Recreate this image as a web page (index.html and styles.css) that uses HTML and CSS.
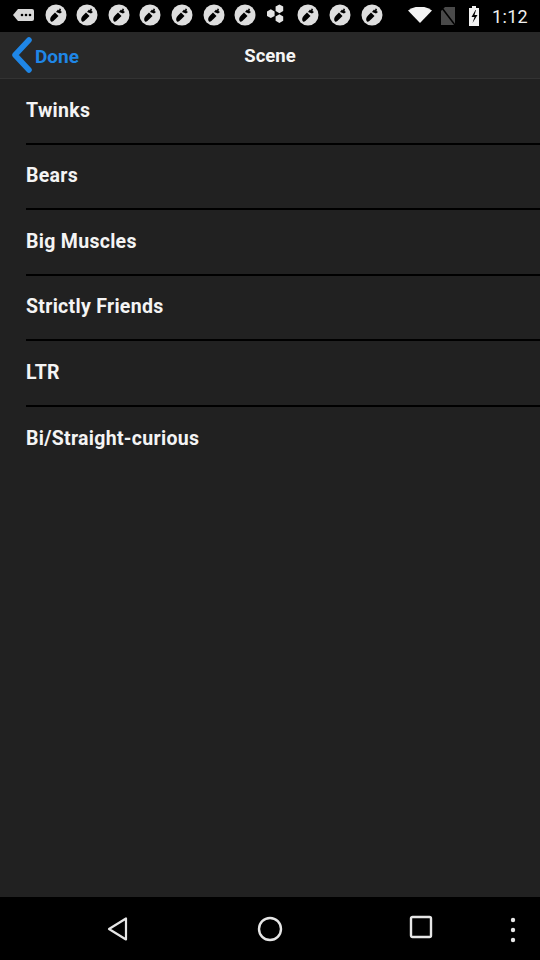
FILE: index.html
```html
<!DOCTYPE html>
<html>
<head>
<meta charset="utf-8">
<link rel="stylesheet" href="styles.css">
</head>
<body>
<div class="screen">
  <div class="statusbar">
    <div class="notifs">
      <svg class="msg" width="22" height="16" viewBox="0 0 22 16"><path d="M5 2h14a2 2 0 0 1 2 2v8a2 2 0 0 1-2 2H5L0 8z" fill="#d8d8d8"/><circle cx="9" cy="8" r="1.3" fill="#000"/><circle cx="13" cy="8" r="1.3" fill="#000"/><circle cx="17" cy="8" r="1.3" fill="#000"/></svg>
      <svg class="app" width="22" height="22" viewBox="0 0 22 22"><circle cx="11" cy="11" r="10.5" fill="#dedede"/><path d="M6 17.5c-1.5-1.5-1-4 1-6l3-3 3.5 3.5-3 3c-2 2-3.5 3.5-4.5 2.5z" fill="#000"/><path d="M11 8l2-2.5 1 1 .5-2 1.5.5-.5 2 1.5 1-2 1.5z" fill="#000"/></svg>
      <svg class="app" width="22" height="22" viewBox="0 0 22 22"><circle cx="11" cy="11" r="10.5" fill="#dedede"/><path d="M6 17.5c-1.5-1.5-1-4 1-6l3-3 3.5 3.5-3 3c-2 2-3.5 3.5-4.5 2.5z" fill="#000"/><path d="M11 8l2-2.5 1 1 .5-2 1.5.5-.5 2 1.5 1-2 1.5z" fill="#000"/></svg>
      <svg class="app" width="22" height="22" viewBox="0 0 22 22"><circle cx="11" cy="11" r="10.5" fill="#dedede"/><path d="M6 17.5c-1.5-1.5-1-4 1-6l3-3 3.5 3.5-3 3c-2 2-3.5 3.5-4.5 2.5z" fill="#000"/><path d="M11 8l2-2.5 1 1 .5-2 1.5.5-.5 2 1.5 1-2 1.5z" fill="#000"/></svg>
      <svg class="app" width="22" height="22" viewBox="0 0 22 22"><circle cx="11" cy="11" r="10.5" fill="#dedede"/><path d="M6 17.5c-1.5-1.5-1-4 1-6l3-3 3.5 3.5-3 3c-2 2-3.5 3.5-4.5 2.5z" fill="#000"/><path d="M11 8l2-2.5 1 1 .5-2 1.5.5-.5 2 1.5 1-2 1.5z" fill="#000"/></svg>
      <svg class="app" width="22" height="22" viewBox="0 0 22 22"><circle cx="11" cy="11" r="10.5" fill="#dedede"/><path d="M6 17.5c-1.5-1.5-1-4 1-6l3-3 3.5 3.5-3 3c-2 2-3.5 3.5-4.5 2.5z" fill="#000"/><path d="M11 8l2-2.5 1 1 .5-2 1.5.5-.5 2 1.5 1-2 1.5z" fill="#000"/></svg>
      <svg class="app" width="22" height="22" viewBox="0 0 22 22"><circle cx="11" cy="11" r="10.5" fill="#dedede"/><path d="M6 17.5c-1.5-1.5-1-4 1-6l3-3 3.5 3.5-3 3c-2 2-3.5 3.5-4.5 2.5z" fill="#000"/><path d="M11 8l2-2.5 1 1 .5-2 1.5.5-.5 2 1.5 1-2 1.5z" fill="#000"/></svg>
      <svg class="app" width="22" height="22" viewBox="0 0 22 22"><circle cx="11" cy="11" r="10.5" fill="#dedede"/><path d="M6 17.5c-1.5-1.5-1-4 1-6l3-3 3.5 3.5-3 3c-2 2-3.5 3.5-4.5 2.5z" fill="#000"/><path d="M11 8l2-2.5 1 1 .5-2 1.5.5-.5 2 1.5 1-2 1.5z" fill="#000"/></svg>
      <svg class="app" width="22" height="22" viewBox="0 0 22 22"><path d="M1 7.5l3.8-2.2 3.8 2.2v4.4l-3.8 2.2L1 11.9z" fill="#e4e4e4"/><path d="M9.6 2.6l3.8-2.2 3.8 2.2V7l-3.8 2.2L9.6 7z" fill="#e4e4e4"/><path d="M9.6 12.4l3.8-2.2 3.8 2.2v4.4l-3.8 2.2-3.8-2.2z" fill="#e4e4e4"/></svg>
      <svg class="app" width="22" height="22" viewBox="0 0 22 22"><circle cx="11" cy="11" r="10.5" fill="#dedede"/><path d="M6 17.5c-1.5-1.5-1-4 1-6l3-3 3.5 3.5-3 3c-2 2-3.5 3.5-4.5 2.5z" fill="#000"/><path d="M11 8l2-2.5 1 1 .5-2 1.5.5-.5 2 1.5 1-2 1.5z" fill="#000"/></svg>
      <svg class="app" width="22" height="22" viewBox="0 0 22 22"><circle cx="11" cy="11" r="10.5" fill="#dedede"/><path d="M6 17.5c-1.5-1.5-1-4 1-6l3-3 3.5 3.5-3 3c-2 2-3.5 3.5-4.5 2.5z" fill="#000"/><path d="M11 8l2-2.5 1 1 .5-2 1.5.5-.5 2 1.5 1-2 1.5z" fill="#000"/></svg>
      <svg class="app" width="22" height="22" viewBox="0 0 22 22"><circle cx="11" cy="11" r="10.5" fill="#dedede"/><path d="M6 17.5c-1.5-1.5-1-4 1-6l3-3 3.5 3.5-3 3c-2 2-3.5 3.5-4.5 2.5z" fill="#000"/><path d="M11 8l2-2.5 1 1 .5-2 1.5.5-.5 2 1.5 1-2 1.5z" fill="#000"/></svg>
    </div>
    <div class="sys">
      <svg class="wifi" width="24" height="16" viewBox="0 0 24 16"><path d="M0 3.5Q12-4.5 24 3.5L12 16z" fill="#f2f2f2"/></svg>
      <svg class="sim" width="14" height="18" viewBox="0 0 14 18"><path d="M4 0h10v18H0V4z" fill="#4a4a4a"/><path d="M1 1l13 17" stroke="#000" stroke-width="1.6"/></svg>
      <svg class="batt" width="12" height="20" viewBox="0 0 12 20"><path d="M4 0h4v2h3v18H1V2h3z" fill="#f2f2f2"/><path d="M7.5 4L3.5 11h3l-2 6 5-8h-3l1.5-5z" fill="#000"/></svg>
      <span class="time">1:12</span>
    </div>
  </div>
  <div class="header">
    <div class="back">
      <svg class="chev" width="24" height="36" viewBox="0 0 24 36"><path d="M19 3L5 18l14 15" fill="none" stroke="#1f86e6" stroke-width="5.5" stroke-linecap="round" stroke-linejoin="round"/></svg>
      <span class="done">Done</span>
    </div>
    <div class="title">Scene</div>
  </div>
  <div class="list">
    <div class="row"><span class="label">Twinks</span></div>
    <div class="row"><span class="label">Bears</span></div>
    <div class="row"><span class="label">Big Muscles</span></div>
    <div class="row"><span class="label">Strictly Friends</span></div>
    <div class="row"><span class="label">LTR</span></div>
    <div class="row last"><span class="label">Bi/Straight-curious</span></div>
  </div>
  <div class="navbar">
    <svg class="nav-back" width="24" height="26" viewBox="0 0 24 26"><path d="M20 2.5v21L3 13z" fill="none" stroke="#e6e6e6" stroke-width="2.2" stroke-linejoin="round"/></svg>
    <svg class="nav-home" width="26" height="26" viewBox="0 0 26 26"><circle cx="13" cy="13" r="11" fill="none" stroke="#e6e6e6" stroke-width="2.4"/></svg>
    <svg class="nav-recent" width="24" height="24" viewBox="0 0 24 24"><rect x="2" y="2" width="20" height="20" rx="1.5" fill="none" stroke="#e6e6e6" stroke-width="2.4"/></svg>
    <svg class="nav-menu" width="6" height="26" viewBox="0 0 6 26"><circle cx="3" cy="3" r="2.2" fill="#e6e6e6"/><circle cx="3" cy="13" r="2.2" fill="#e6e6e6"/><circle cx="3" cy="23" r="2.2" fill="#e6e6e6"/></svg>
  </div>
</div>
</body>
</html>
```
FILE: styles.css
```css
* { box-sizing: border-box; }
html, body { margin: 0; padding: 0; }
body {
  width: 540px;
  height: 960px;
  overflow: hidden;
  background: #212121;
  font-family: Roboto, "Liberation Sans", sans-serif;
}
.screen {
  width: 540px;
  height: 960px;
  display: flex;
  flex-direction: column;
  background: #212121;
}
.statusbar {
  height: 32px;
  background: #000;
  display: flex;
  align-items: center;
  justify-content: space-between;
  padding: 0 12px 0 13px;
  flex-shrink: 0;
}
.notifs {
  display: flex;
  align-items: center;
  gap: 9.6px;
  margin-top: -2px;
}
.sys {
  display: flex;
  align-items: center;
}
.wifi { margin-right: 9px; margin-top: -2px; }
.sim { margin-right: 13px; margin-top: -1px; }
.batt { margin-right: 12px; }
.time {
  color: #f0f0f0;
  font-size: 18px;
  font-family: Roboto, sans-serif;
  letter-spacing: 0.3px;
}
.header {
  height: 47px;
  background: #282828;
  border-bottom: 1px solid #333;
  display: flex;
  align-items: center;
  justify-content: center;
  position: relative;
  flex-shrink: 0;
  padding-top: 2px;
}
.back {
  position: absolute;
  left: 10px;
  top: 5px;
  display: flex;
  align-items: center;
}
.chev { display: block; margin-right: 1px; }
.done {
  color: #1f86e6;
  font-size: 19px;
  font-weight: 700;
  margin-top: 2px;
}
.title {
  color: #f5f5f5;
  font-size: 18.5px;
  font-weight: 700;
}
.list {
  flex: 1;
  display: flex;
  flex-direction: column;
}
.row {
  height: 65.5px;
  margin-left: 26px;
  border-bottom: 2px solid #000;
  display: flex;
  align-items: center;
  flex-shrink: 0;
  padding-bottom: 1px;
}
.row.last { border-bottom: none; }
.label {
  color: #f4f4f4;
  font-size: 19.5px;
  font-weight: 700;
  letter-spacing: 0.3px;
}
.navbar {
  height: 63px;
  background: #000;
  flex-shrink: 0;
  display: flex;
  align-items: center;
  position: relative;
  padding-top: 1px;
}
.nav-back { position: absolute; left: 106px; top: 19px; }
.nav-home { position: absolute; left: 257px; top: 19px; }
.nav-recent { position: absolute; left: 409px; top: 18px; }
.nav-menu { position: absolute; left: 510px; top: 20px; }
```
